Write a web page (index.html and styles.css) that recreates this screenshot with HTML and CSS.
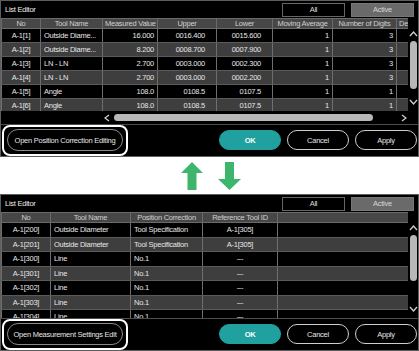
FILE: index.html
```html
<!DOCTYPE html>
<html lang="en">
<head>
    <meta charset="UTF-8">
    <title>List Editor</title>
    <link rel="stylesheet" href="styles.css">
</head>
<body>
    <div class="panel">
        <div class="titlebar">
            <span class="title">List Editor</span>
            <div class="tabs">
                <span class="tab">All</span>
                <span class="tab active">Active</span>
            </div>
        </div>
        <div class="grid-area">
            <div class="table-wrap">
                <table class="list list-top">
                    <colgroup>
                        <col class="c-no"><col class="c-name"><col class="c-meas"><col class="c-up"><col class="c-low"><col class="c-avg"><col class="c-dig"><col class="c-de">
                    </colgroup>
                    <tr><th>No</th><th>Tool Name</th><th>Measured Value</th><th>Upper</th><th>Lower</th><th>Moving Average</th><th>Number of Digits</th><th class="left">De</th></tr>
                    <tr><td class="center">A-1[1]</td><td>Outside Diame...</td><td class="right">16.000</td><td class="num">0016.400</td><td class="num">0015.600</td><td class="right">1</td><td class="right">3</td><td></td></tr>
                    <tr><td class="center">A-1[2]</td><td>Outside Diame...</td><td class="right">8.200</td><td class="num">0008.700</td><td class="num">0007.900</td><td class="right">1</td><td class="right">3</td><td></td></tr>
                    <tr><td class="center">A-1[3]</td><td>LN - LN</td><td class="right">2.700</td><td class="num">0003.000</td><td class="num">0002.300</td><td class="right">1</td><td class="right">3</td><td></td></tr>
                    <tr><td class="center">A-1[4]</td><td>LN - LN</td><td class="right">2.700</td><td class="num">0003.000</td><td class="num">0002.200</td><td class="right">1</td><td class="right">3</td><td></td></tr>
                    <tr><td class="center">A-1[5]</td><td>Angle</td><td class="right">108.0</td><td class="num">0108.5</td><td class="num">0107.5</td><td class="right">1</td><td class="right">1</td><td></td></tr>
                    <tr><td class="center">A-1[6]</td><td>Angle</td><td class="right">108.0</td><td class="num">0108.5</td><td class="num">0107.5</td><td class="right">1</td><td class="right">1</td><td></td></tr>
                </table>
            </div>
            <div class="vscroll">
                <svg class="chev" width="9" height="6" viewBox="0 0 9 6"><polyline points="1,5 4.5,1 8,5"/></svg>
                <div class="vthumb"></div>
                <svg class="chev chev-down" width="9" height="6" viewBox="0 0 9 6"><polyline points="1,1 4.5,5 8,1"/></svg>
            </div>
        </div>
        <div class="hscroll">
            <svg class="chev" width="6" height="8" viewBox="0 0 6 8"><polyline points="5,1 1,4 5,7"/></svg>
            <div class="hthumb"></div>
            <svg class="chev" width="6" height="8" viewBox="0 0 6 8"><polyline points="1,1 5,4 1,7"/></svg>
        </div>
        <div class="footer">
            <div class="highlight">
                <span class="btn btn-open">Open Position Correction Editing</span>
            </div>
            <div class="actions">
                <span class="btn btn-ok">OK</span>
                <span class="btn">Cancel</span>
                <span class="btn">Apply</span>
            </div>
        </div>
    </div>

    <div class="arrows">
        <svg width="22" height="28" viewBox="0 0 22 28"><polygon points="11,0 22,11 15.5,11 15.5,28 6.5,28 6.5,11 0,11"/></svg>
        <svg width="23" height="28" viewBox="0 0 23 28"><polygon points="11.5,28 23,17 16,17 16,0 7,0 7,17 0,17"/></svg>
    </div>

    <div class="panel">
        <div class="titlebar">
            <span class="title">List Editor</span>
            <div class="tabs">
                <span class="tab">All</span>
                <span class="tab active">Active</span>
            </div>
        </div>
        <div class="grid-area grid-tall">
            <div class="table-wrap">
                <table class="list list-bottom">
                    <colgroup>
                        <col class="b-no"><col class="b-name"><col class="b-pos"><col class="b-ref"><col class="b-rest">
                    </colgroup>
                    <tr><th>No</th><th>Tool Name</th><th>Position Correction</th><th>Reference Tool ID</th><th></th></tr>
                    <tr><td class="center">A-1[200]</td><td>Outside Diameter</td><td>Tool Specification</td><td class="center">A-1[305]</td><td></td></tr>
                    <tr><td class="center">A-1[201]</td><td>Outside Diameter</td><td>Tool Specification</td><td class="center">A-1[305]</td><td></td></tr>
                    <tr><td class="center">A-1[300]</td><td>Line</td><td>No.1</td><td class="center">---</td><td></td></tr>
                    <tr><td class="center">A-1[301]</td><td>Line</td><td>No.1</td><td class="center">---</td><td></td></tr>
                    <tr><td class="center">A-1[302]</td><td>Line</td><td>No.1</td><td class="center">---</td><td></td></tr>
                    <tr><td class="center">A-1[303]</td><td>Line</td><td>No.1</td><td class="center">---</td><td></td></tr>
                    <tr><td class="center">A-1[304]</td><td>Line</td><td>No.1</td><td class="center">---</td><td></td></tr>
                </table>
            </div>
            <div class="vscroll">
                <svg class="chev" width="9" height="6" viewBox="0 0 9 6"><polyline points="1,5 4.5,1 8,5"/></svg>
                <div class="vthumb"></div>
                <svg class="chev chev-down" width="9" height="6" viewBox="0 0 9 6"><polyline points="1,1 4.5,5 8,1"/></svg>
            </div>
        </div>
        <div class="footer">
            <div class="highlight">
                <span class="btn btn-open">Open Measurement Settings Edit</span>
            </div>
            <div class="actions">
                <span class="btn btn-ok">OK</span>
                <span class="btn">Cancel</span>
                <span class="btn">Apply</span>
            </div>
        </div>
    </div>
</body>
</html>
```

FILE: styles.css
```css
* {
    box-sizing: border-box;
}
body {
    margin: 0;
    background-color: #fff;
    font-family: "Liberation Sans", Arial, sans-serif;
    font-size: 7.5px;
    letter-spacing: -0.25px;
    color: #e6e6e6;
}
.panel {
    width: 419px;
    height: 157px;
    background-color: #000;
    border: 1px solid #5e5e5e;
    display: flex;
    flex-direction: column;
}
.titlebar {
    height: 17px;
    flex: none;
    display: flex;
    align-items: center;
    justify-content: space-between;
    padding: 0 4px 0 4px;
}
.title {
    color: #eee;
}
.tabs {
    display: flex;
    gap: 6px;
}
.tab {
    width: 63px;
    height: 14px;
    border: 1px solid #666;
    display: flex;
    align-items: center;
    justify-content: center;
    color: #ddd;
}
.tab.active {
    background-color: #6a6a6a;
    border-color: #777;
    color: #d6d6d6;
}
.grid-area {
    height: 93px;
    flex: none;
    display: flex;
}
.grid-tall {
    height: 106px;
}
.table-wrap {
    flex: 1;
    overflow: hidden;
}
.list {
    border-collapse: collapse;
    table-layout: fixed;
}
.list th {
    height: 10px;
    padding: 0 2px;
    background-color: #474747;
    color: #cfcfcf;
    font-weight: normal;
    border: 1px solid #6a6a6a;
    white-space: nowrap;
    overflow: hidden;
    line-height: 8px;
}
.list td {
    height: 14px;
    padding: 0 3px;
    border: 1px solid #5a5a5a;
    border-left-color: #6e6e6e;
    border-right-color: #6e6e6e;
    white-space: nowrap;
    overflow: hidden;
}
.list-bottom td {
    height: 14.5px;
}
.list tr:nth-child(odd) td {
    background-color: #3e3e3e;
}
.list th.left {
    text-align: left;
}
.center {
    text-align: center;
}
.right {
    text-align: right;
}
.list td.num {
    text-align: right;
    padding-right: 11px;
}
.list-top {
    width: 437px;
}
.c-no { width: 39px; }
.c-name { width: 62px; }
.c-meas { width: 55px; }
.c-up { width: 59px; }
.c-low { width: 56px; }
.c-avg { width: 60px; }
.c-dig { width: 64px; }
.c-de { width: 42px; }
.list-bottom {
    width: 407px;
}
.b-no { width: 49px; }
.b-name { width: 80px; }
.b-pos { width: 72px; }
.b-ref { width: 75px; }
.b-rest { width: 131px; }
.vscroll {
    width: 10px;
    flex: none;
    display: flex;
    flex-direction: column;
    align-items: center;
    padding: 13px 0 6px;
}
.chev {
    flex: none;
}
.chev polyline {
    fill: none;
    stroke: #d0d0d0;
    stroke-width: 1.3;
}
.vthumb {
    width: 7px;
    height: 48px;
    margin-top: 4px;
    background-color: #b8b8b8;
    border-radius: 4px;
}
.grid-tall .vthumb {
    height: 46px;
}
.chev-down {
    margin-top: auto;
}
.hscroll {
    height: 13px;
    flex: none;
    display: flex;
    align-items: center;
    padding-left: 103px;
}
.hthumb {
    width: 259px;
    height: 7px;
    margin: 0 28px 0 4px;
    background-color: #b8b8b8;
    border-radius: 4px;
}
.footer {
    height: 31px;
    flex: none;
    display: flex;
    align-items: center;
    border-top: 1px solid #4c4c4c;
}
.highlight {
    height: 31px;
    margin-left: 1px;
    padding: 2px 3px;
    border: 2px solid #fff;
    border-radius: 8px;
    display: flex;
    align-items: center;
}
.btn {
    width: 62px;
    height: 20px;
    border: 1px solid #cfcfcf;
    border-radius: 10px;
    display: flex;
    align-items: center;
    justify-content: center;
    white-space: nowrap;
    color: #e6e6e6;
}
.btn-open {
    width: 116px;
    height: 22px;
    border-color: #8a8a8a;
    border-radius: 11px;
}
.btn-ok {
    background-color: #20a09e;
    border-color: #20a09e;
    color: #fff;
    font-weight: bold;
}
.actions {
    margin-left: auto;
    display: flex;
    gap: 6px;
    padding-right: 1px;
}
.arrows {
    height: 37px;
    display: flex;
    align-items: center;
    justify-content: center;
    gap: 15px;
    padding-left: 3px;
}
.arrows polygon {
    fill: #3db56c;
}
```
